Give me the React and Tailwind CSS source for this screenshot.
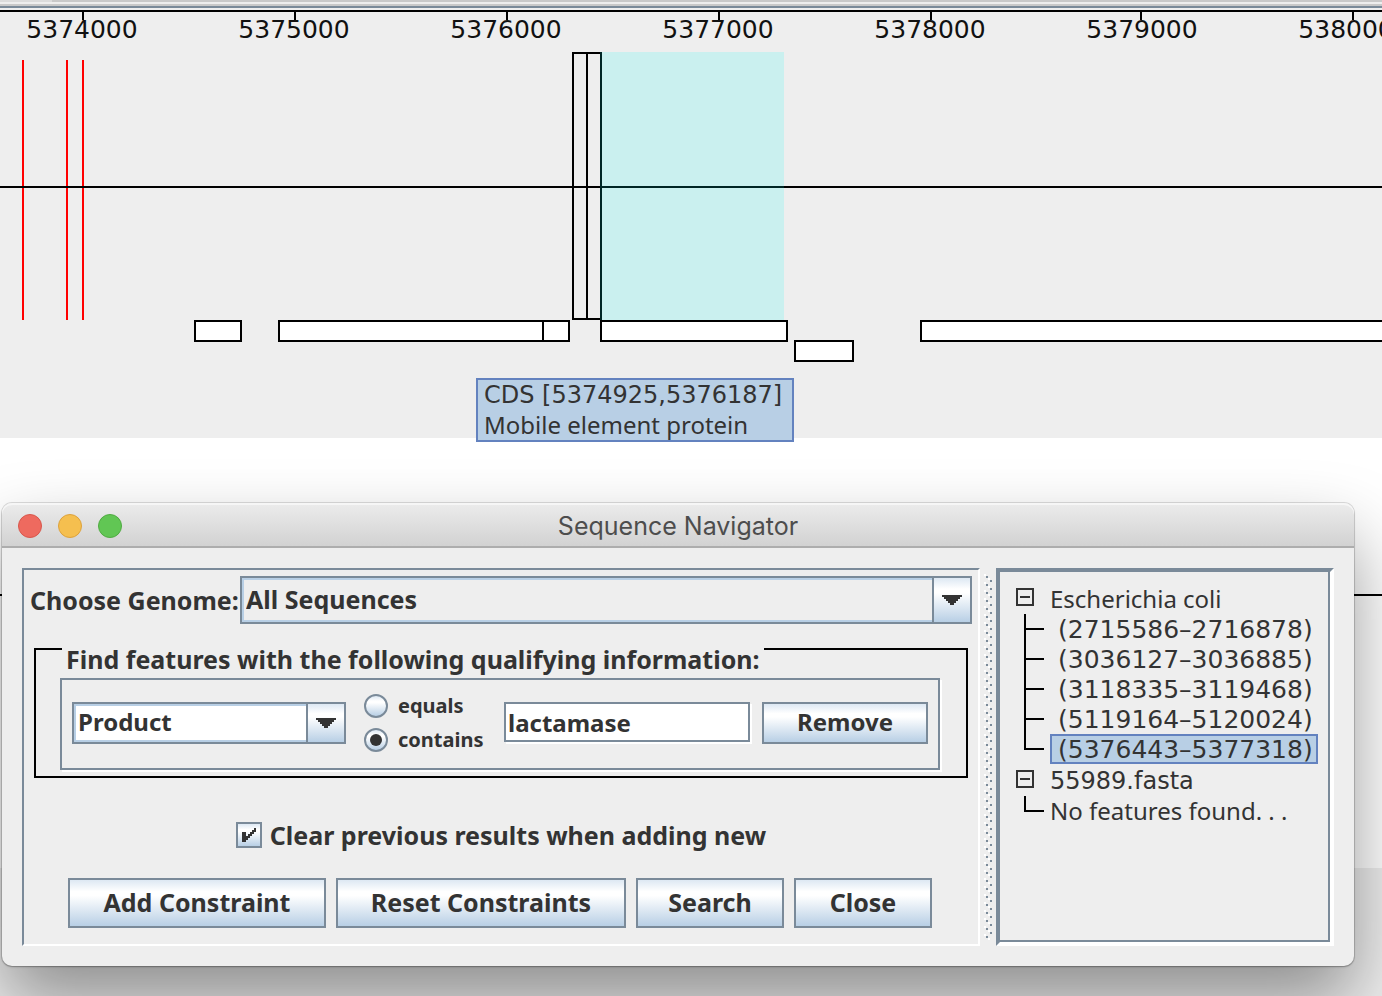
import React from "react";

const ticks = [
  { x: 82, mark: 82, label: "5374000" },
  { x: 294, mark: 294, label: "5375000" },
  { x: 506, mark: 506, label: "5376000" },
  { x: 718, mark: 718, label: "5377000" },
  { x: 930, mark: 930, label: "5378000" },
  { x: 1142, mark: 1140, label: "5379000" },
  { x: 1354, mark: 1352, label: "5380000" },
];

const features = [
  { x: 194, y: 308, w: 48 },
  { x: 278, y: 308, w: 266 },
  { x: 542, y: 308, w: 28 },
  { x: 600, y: 308, w: 188 },
  { x: 794, y: 328, w: 60 },
  { x: 920, y: 308, w: 4000 },
];

const ecoliHits = [
  "(2715586–2716878)",
  "(3036127–3036885)",
  "(3118335–3119468)",
  "(5119164–5120024)",
  "(5376443–5377318)",
];

const metalFill =
  "bg-[linear-gradient(to_bottom,#dde8f3_0%,#ffffff_25%,#ffffff_34%,#b8cfe5_100%)]";

function GenomeTrack() {
  return (
    <section className="relative h-[438px] shrink-0 bg-[#eeeeee]">
      <div className="flex h-[2px] bg-[#c9c9c9]">
        <div className="w-[52px] bg-[#dcdcdc]" />
      </div>
      <div className="mt-[2px] h-[2px] bg-[#c9c9c9]" />
      <div className="h-[2px] bg-[#7a8a99]" />
      <div className="mt-[2px] h-[2px] bg-black" />
      <svg className="block h-[426px] w-full" shapeRendering="crispEdges" aria-label="Genome features">
        {ticks.map((t) => (
          <g key={t.label}>
            <rect x={t.mark} y="0" width="2" height="8" />
            <text
              x={t.x}
              y="26"
              textAnchor="middle"
              className="fill-[#111111] font-['DejaVu_Sans',sans-serif] text-[25px]"
            >
              {t.label}
            </text>
          </g>
        ))}
        {[22, 66, 82].map((x) => (
          <rect key={x} x={x} y="48" width="2" height="260" fill="#ff0000" />
        ))}
        <rect x="573" y="41" width="14" height="266" fill="none" stroke="#000" strokeWidth="2" />
        <rect x="587" y="41" width="14" height="266" fill="none" stroke="#000" strokeWidth="2" />
        <rect x="0" y="174" width="100%" height="2" />
        <rect x="600" y="40" width="184" height="268" fill="rgb(0 255 245)" fillOpacity="0.15" />
        {features.map((f) => (
          <rect
            key={f.x}
            x={f.x + 1}
            y={f.y + 1}
            width={f.w - 2}
            height="20"
            fill="#fff"
            stroke="#000"
            strokeWidth="2"
          />
        ))}
      </svg>
    </section>
  );
}

function Combo({ id, label, value, options, tone, size }) {
  return (
    <div className={"relative w-full border-2 border-[#7a8a99] " + size}>
      <select
        id={id}
        aria-label={label}
        defaultValue={value}
        className={
          "block h-full w-full appearance-none border-2 border-[#b8cfe5] pr-10 pb-[2px] pl-[2px] leading-[30px] font-bold text-[#333333] outline-none " +
          tone
        }
      >
        {options.map((o) => (
          <option key={o}>{o}</option>
        ))}
      </select>
      <div
        className={
          "pointer-events-none absolute inset-y-0 right-0 flex w-[38px] items-center justify-center border-l-2 border-[#7a8a99] " +
          metalFill
        }
      >
        <svg width="20" height="10" viewBox="0 0 20 10">
          <path d="M0 0h20v2h-2v2h-2v2h-2v2h-2v2H8V8H6V6H4V4H2V2H0z" fill="#333" />
        </svg>
      </div>
    </div>
  );
}

function MetalButton({ children, size }) {
  return (
    <button
      type="button"
      className={
        "shrink-0 border-2 border-[#7a8a99] pb-[2px] text-center leading-[30px] font-bold whitespace-nowrap " +
        size +
        " " +
        metalFill
      }
    >
      {children}
    </button>
  );
}

function RadioOption({ label, checked }) {
  return (
    <label className="flex h-[34px] items-center gap-[10px] text-[20px] leading-6 font-bold">
      <span className="relative flex size-6">
        <input
          type="radio"
          name="match"
          defaultChecked={checked}
          className={
            "peer size-6 appearance-none rounded-full border-2 border-[#7a8a99] " + metalFill
          }
        />
        <span className="pointer-events-none absolute inset-[6px] hidden rounded-full bg-[#333333] peer-checked:block" />
      </span>
      {label}
    </label>
  );
}

function ConstraintForm() {
  return (
    <form className="min-w-0 flex-1 border-2 border-t-[#7a8a99] border-r-white border-b-white border-l-[#7a8a99] px-[6px] pt-[6px] pb-4 text-[25px]">
      <div className="flex items-center">
        <label htmlFor="genome" className="w-[210px] shrink-0 font-bold whitespace-nowrap">
          Choose Genome:
        </label>
        <Combo
          id="genome"
          label="Choose Genome"
          value="All Sequences"
          options={["All Sequences", "Escherichia coli", "55989.fasta"]}
          tone="bg-[#eeeeee]"
          size="h-12"
        />
      </div>

      <fieldset className="mx-1 mt-6 min-w-0 border-x-2 border-b-2 border-black">
        <legend className="float-left flex h-[30px] w-full items-start">
          <span className="w-[26px] shrink-0 border-t-2 border-black" />
          <span className="px-1 leading-[22px] font-bold whitespace-nowrap">
            Find features with the following qualifying information:
          </span>
          <span className="flex-1 border-t-2 border-black" />
        </legend>
        <div className="clear-both mr-[26px] mb-[6px] ml-6 flex h-[92px] items-center border-2 border-[#7a8a99] px-[10px] pb-[2px] text-[24px] shadow-[2px_2px_0_#ffffff]">
          <div className="w-[274px] shrink-0">
            <Combo
              id="qualifier"
              label="Qualifier"
              value="Product"
              options={["Product", "Gene", "Locus tag"]}
              tone="bg-white"
              size="h-[42px]"
            />
          </div>
          <div className="ml-[18px] w-[140px] shrink-0">
            <RadioOption label="equals" />
            <RadioOption label="contains" checked />
          </div>
          <input
            type="text"
            aria-label="Value"
            defaultValue="lactamase"
            className="mb-[2px] h-10 min-w-0 flex-1 border-2 border-[#7a8a99] bg-white px-[2px] font-bold shadow-[2px_2px_0_#ffffff] outline-none"
          />
          <div className="ml-3 flex">
            <MetalButton size="h-[42px] w-[166px]">Remove</MetalButton>
          </div>
        </div>
      </fieldset>

      <div className="mt-11 flex justify-center">
        <label className="flex h-[26px] items-center gap-2 font-bold whitespace-nowrap">
          <span className="relative flex size-[26px]">
            <input
              type="checkbox"
              defaultChecked
              className={"peer size-[26px] appearance-none border-2 border-[#7a8a99] " + metalFill}
            />
            <svg
              className="pointer-events-none absolute inset-0 hidden peer-checked:block"
              width="26"
              height="26"
              viewBox="0 0 26 26"
            >
              <path
                d="M6 10h4v4h2v-2h2v-2h2V8h2V6h2v4h-2v2h-2v2h-2v2h-2v2h-2v2H6z"
                fill="#333"
              />
            </svg>
          </span>
          Clear previous results when adding new
        </label>
      </div>

      <div className="mt-[30px] flex justify-center gap-[10px] pr-[2px]">
        <MetalButton size="h-[50px] w-[258px]">Add Constraint</MetalButton>
        <MetalButton size="h-[50px] w-[290px]">Reset Constraints</MetalButton>
        <MetalButton size="h-[50px] w-[148px]">Search</MetalButton>
        <MetalButton size="h-[50px] w-[138px]">Close</MetalButton>
      </div>
    </form>
  );
}

function Splitter() {
  return (
    <div className="mx-1 w-2 shrink-0 py-[6px]">
      <svg className="block h-full w-2" shapeRendering="crispEdges" aria-hidden="true">
        <defs>
          <pattern id="bumps" width="8" height="8" patternUnits="userSpaceOnUse">
            <rect x="0" y="0" width="2" height="2" fill="#fff" />
            <rect x="4" y="4" width="2" height="2" fill="#fff" />
            <rect x="2" y="2" width="2" height="2" fill="#7a8a99" />
            <rect x="6" y="6" width="2" height="2" fill="#7a8a99" />
          </pattern>
        </defs>
        <rect width="8" height="100%" fill="url(#bumps)" />
      </svg>
    </div>
  );
}

function TreeHeading({ name, font }) {
  return (
    <div className="flex h-[30px] items-center">
      <svg className="mr-4 mb-1 shrink-0" width="18" height="18" viewBox="0 0 18 18" aria-hidden="true">
        <rect x="1" y="1" width="16" height="16" fill="none" stroke="#333" strokeWidth="2" />
        <rect x="4" y="8" width="10" height="2" fill="#333" />
      </svg>
      <span className={"whitespace-nowrap " + font}>{name}</span>
    </div>
  );
}

function TreeLeaf({ children, last }) {
  return (
    <li className="flex h-[30px]">
      <span className="ml-2 flex w-[26px] shrink-0 flex-col">
        <span className="h-4 w-5 border-b-2 border-l-2 border-black" />
        {!last && <span className="flex-1 border-l-2 border-black" />}
      </span>
      {children}
    </li>
  );
}

function ResultTree() {
  return (
    <div className="flex w-[338px] shrink-0 border-4 border-t-[#7a8a99] border-r-white border-b-white border-l-[#7a8a99]">
      <div className="flex-1 border-r-2 border-b-2 border-[#7a8a99] pt-3 pl-4">
        <TreeHeading name="Escherichia coli" font="text-[24px]" />
        <ul>
          {ecoliHits.map((hit, i) => {
            const selected = i === ecoliHits.length - 1;
            return (
              <TreeLeaf key={hit} last={selected}>
                <span
                  className={
                    "w-[268px] border-2 pl-[6px] font-['DejaVu_Sans',sans-serif] text-[25px] leading-[28px] whitespace-nowrap " +
                    (selected ? "border-[#6382bf] bg-[#b8cfe5]" : "border-transparent")
                  }
                >
                  {hit}
                </span>
              </TreeLeaf>
            );
          })}
        </ul>
        <div className="mt-[2px]">
          <TreeHeading name="55989.fasta" font="font-['DejaVu_Sans',sans-serif] text-[24px]" />
          <ul>
            <TreeLeaf last>
              <span className="leading-[30px] whitespace-nowrap">No features found. . .</span>
            </TreeLeaf>
          </ul>
        </div>
      </div>
    </div>
  );
}

function NavigatorWindow() {
  return (
    <div className="relative mt-[65px] mr-7 ml-[2px] rounded-[10px] bg-[#eeeeee] shadow-[0_0_0_1px_rgba(0,0,0,0.12),0_1px_2px_rgba(0,0,0,0.25),0_36px_72px_rgba(0,0,0,0.4)]">
      <header className="grid h-[45px] grid-cols-[1fr_auto_1fr] items-center rounded-t-[10px] border-b-2 border-[#adadad] bg-linear-to-b from-[#ececec] to-[#d2d2d2] px-4 pt-[3px] shadow-[inset_0_2px_0_#f6f6f6]">
        <div className="flex gap-4">
          <button type="button" aria-label="Close window" className="size-6 rounded-full border border-[#d8574c] bg-[#ee6a5f]" />
          <button type="button" aria-label="Minimize window" className="size-6 rounded-full border border-[#dda23c] bg-[#f5bf4f]" />
          <button type="button" aria-label="Zoom window" className="size-6 rounded-full border border-[#50ab42] bg-[#61c654]" />
        </div>
        <h1 className="font-['Inter',sans-serif] text-[25px] leading-[30px] text-[#4d4d4d]">
          Sequence Navigator
        </h1>
        <span />
      </header>
      <div className="flex p-5">
        <ConstraintForm />
        <Splitter />
        <ResultTree />
      </div>
    </div>
  );
}

export default function App() {
  return (
    <div className="relative flex min-h-screen flex-col overflow-hidden bg-white font-['Noto_Sans',sans-serif] text-[24px] leading-[30px] text-[#333333]">
      <GenomeTrack />
      <section className="relative flex-1 overflow-hidden">
        <div className="absolute inset-x-0 top-[156px] h-[2px] bg-black" />
        <div className="absolute inset-x-0 top-[430px] bottom-0 bg-[#eeeeee]" />
        <NavigatorWindow />
      </section>
      <div
        role="tooltip"
        className="absolute top-[378px] left-[476px] w-[318px] border-2 border-[#6382bf] bg-[#b8cfe5] px-[6px] whitespace-nowrap"
      >
        <p className="font-['DejaVu_Sans',sans-serif]">CDS [5374925,5376187]</p>
        <p>Mobile element protein</p>
      </div>
    </div>
  );
}
